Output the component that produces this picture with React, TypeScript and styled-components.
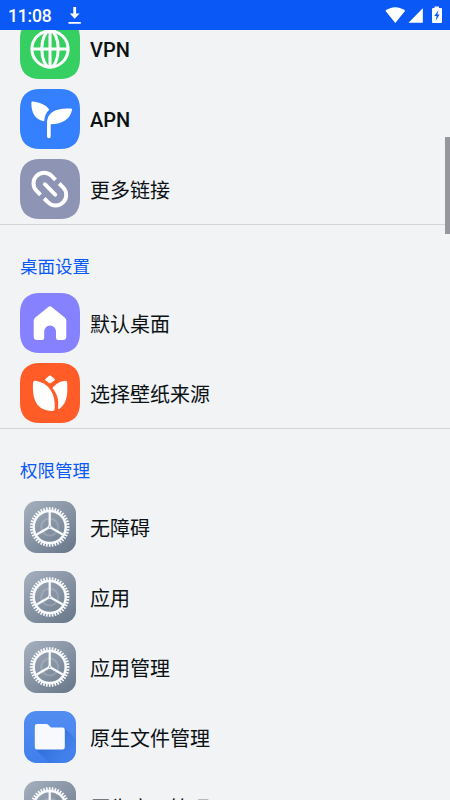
import React from 'react';
import styled, { createGlobalStyle } from 'styled-components';

const GlobalStyle = createGlobalStyle`
  * { box-sizing: border-box; }
  html, body { margin: 0; padding: 0; background: #f1f3f5; overflow: hidden; }
`;

const Screen = styled.div`
  position: relative;
  display: flex;
  flex-direction: column;
  width: 450px;
  height: 800px;
  overflow: hidden;
  background: #f1f3f5;
  color: #0c1114;
  font-family: Roboto, 'Noto Sans CJK SC', sans-serif;
`;

const StatusBar = styled.header`
  display: flex;
  flex: none;
  align-items: center;
  height: 30px;
  padding: 0 8px;
  background: #0a59f7;
  color: #fff;
`;

const Clock = styled.span`
  width: 60px;
  padding-top: 2px;
  font-size: 17.5px;
  font-weight: 500;
  line-height: 28px;
  letter-spacing: -0.15px;
`;

const StatusIcons = styled.div`
  display: flex;
  margin-left: auto;
`;

const List = styled.main`
  flex: 1;
  min-height: 0;
  overflow: hidden;
`;

const Group = styled.section<{ $scrolled?: boolean }>`
  margin-top: ${({ $scrolled }) => ($scrolled ? '-15.6px' : '0')};
`;

const Divider = styled.hr`
  height: 1px;
  margin: 0;
  border: 0;
  background: #d3d5d8;
`;

const GroupTitle = styled.h2`
  height: 62.8px;
  margin: 0;
  padding: 27px 20px 0;
  color: #0a59f7;
  font-size: 17.5px;
  font-weight: 400;
  line-height: 30px;
`;

const Row = styled.div`
  display: flex;
  align-items: center;
  height: 70px;
  padding-left: 20px;
`;

const Label = styled.span<{ $latin?: boolean }>`
  padding-top: ${({ $latin }) => ($latin ? '1px' : '3px')};
  margin-left: 10px;
  font-size: 20px;
  font-weight: ${({ $latin }) => ($latin ? 500 : 400)};
  line-height: 30px;
  white-space: nowrap;
`;

const IconSvg = styled.svg`
  display: block;
  flex: none;
  width: 60px;
  height: 60px;
`;

const ScrollThumb = styled.div`
  position: absolute;
  top: 137px;
  right: 0;
  width: 5px;
  height: 97px;
  background: #96979e;
`;

const SQUIRCLE =
  'M20 0H40C53 0 60 7 60 20V40C60 53 53 60 40 60H20C7 60 0 53 0 40V20C0 7 7 0 20 0Z';

const Tile = ({ color, children }: { color: string; children: React.ReactNode }) => (
  <IconSvg viewBox="0 0 60 60">
    <path d={SQUIRCLE} fill={color} />
    {children}
  </IconSvg>
);

const GlobeIcon = () => (
  <Tile color="#35cf62">
    <g fill="none" stroke="#fff" strokeWidth="3">
      <circle cx="30" cy="30" r="18.1" />
      <ellipse cx="30" cy="30" rx="8.2" ry="18.1" />
      <path d="M30 12v36M12 30h36" />
    </g>
  </Tile>
);

const SproutIcon = () => (
  <Tile color="#3580fe">
    <path
      d="M11.400 13.600c0-.8.6-1.300 1.400-1.100 7.200 1.100 13.700 3.200 16.400 8.200-3.100 2.800-4.700 6.500-5 11.600-8.700-1-13.200-8.500-12.800-18.700z"
      fill="#fff"
    />
    <path
      d="M50.700 19.600c1 0 1.500.6 1.300 1.500C50 30.500 42.600 35 30.700 35.300V47.300a1.850 1.850 0 0 1-3.700 0V34C27 23.800 35 18.800 50.700 19.600z"
      fill="#fff"
    />
  </Tile>
);

const LinkIcon = () => (
  <Tile color="#8e94b3">
    <g fill="none" stroke="#fff" strokeWidth="3.9">
      <path d="M20.500 35.800L16.600 31.900A10.600 10.600 0 0 1 31.600 16.900L35.500 20.800" />
      <path d="M39.200 24.500L43.100 28.400A10.600 10.600 0 0 1 28.100 43.400L24.200 39.500" />
      <path d="M24.800 25.200L35.200 35.600" strokeLinecap="round" />
    </g>
  </Tile>
);

const HomeIcon = () => (
  <Tile color="#8581ff">
    <path
      d="M28 14.200Q30 12.500 32 14.200L44.700 24.500Q46.300 25.800 46.300 28V43.500Q46.300 47 43 47H38.500Q36 47 36 44.500V38.500a5.900 5.900 0 0 0-11.800 0V44.500Q24.200 47 21.700 47H17Q13.700 47 13.700 43.500V28Q13.700 25.800 15.300 24.500Z"
      fill="#fff"
    />
  </Tile>
);

const TulipIcon = () => (
  <Tile color="#ff5c28">
    <g fill="#fff">
      <path d="M29.100 12.800q.9-.8 1.800 0l3.700 3.200q.6.600 0 1.200l-3.700 2.700q-.9.600-1.800 0l-3.700-2.700q-.6-.6 0-1.200z" />
      <path d="M13 20.300c0-1.800.9-2.800 2.500-2.500 13.300 2.200 20 12.400 19.300 27.300-.1 2.100-1.100 3.100-3 2.900C17 47.200 12.200 37.500 13 20.300z" />
      <path d="M45 17.700c1.500-.3 2.200.4 2.200 1.900.5 11.600.1 20.500-7.600 26.100-1.100.8-1.700.3-1.500-1 .8-8-.7-13.200-5.700-19.600C36.100 20.400 39.800 18.600 45 17.700z" />
    </g>
  </Tile>
);

const TEETH = Array.from({ length: 40 }, (_, i) => i * 9);
const SPOKES = [0, 120, 240];

const GearIcon = ({ id }: { id: string }) => (
  <IconSvg viewBox="0 0 60 60">
    <defs>
      <linearGradient id={id} x1="0" y1="0" x2=".8" y2="1">
        <stop offset="0" stopColor="#a6b0bf" />
        <stop offset="1" stopColor="#6c7b8d" />
      </linearGradient>
    </defs>
    <rect x="4" y="4" width="52" height="52" rx="12.5" fill={`url(#${id})`} />
    <circle cx="29.700" cy="30" r="8.500" fill="none" stroke="#fff" strokeOpacity=".16" strokeWidth="2.200" />
    <g fill="none" stroke="#f8fafc">
      <circle cx="29.700" cy="30" r="16" strokeWidth="2.400" />
      {TEETH.map((a) => (
        <path key={a} d="M29.700 10.200V14" strokeWidth="1.700" transform={`rotate(${a} 29.700 30)`} />
      ))}
      {SPOKES.map((a) => (
        <path key={a} d="M29.700 28.500V15" strokeWidth="2.200" transform={`rotate(${a} 29.700 30)`} />
      ))}
    </g>
    <circle cx="29.700" cy="30" r="2" fill="#f8fafc" />
    <circle cx="29.700" cy="30" r=".8" fill="#8794a4" />
  </IconSvg>
);

const FolderIcon = () => (
  <IconSvg viewBox="0 0 60 60">
    <defs>
      <linearGradient id="folder-bg" x1="0" y1="0" x2="0" y2="1">
        <stop offset="0" stopColor="#528df1" />
        <stop offset="1" stopColor="#4080ed" />
      </linearGradient>
      <linearGradient id="folder-shade" x1="0" y1="0" x2="1" y2="1">
        <stop offset="0.4" stopColor="#225dc5" stopOpacity=".45" />
        <stop offset="0.800" stopColor="#225dc5" stopOpacity="0" />
      </linearGradient>
    </defs>
    <rect x="4" y="4" width="52" height="52" rx="12.5" fill="url(#folder-bg)" />
    <path d="M44.500 21L56 32.500V44Q55 55 44 56H29L16 43Z" fill="url(#folder-shade)" />
    <path
      d="M17 17H26.500Q27.500 17 28.200 17.700L31 20.500H42.500Q44.800 20.500 44.800 22.800V40.300Q44.800 42.600 42.500 42.600H17Q14.800 42.600 14.800 40.300V19.200Q14.800 17 17 17Z"
      fill="#f8f9fc"
    />
  </IconSvg>
);

const DownloadGlyph = () => (
  <svg width="14" height="30" viewBox="0 0 14 30" fill="#fff">
    <path d="M5.300 7h2.800v6.500h3.500L6.700 18.700 1.800 13.500h3.500zM.500 22h12.300v1.700H.500z" />
  </svg>
);

const SystemGlyphs = () => (
  <svg width="58" height="30" viewBox="384 0 58 30" fill="#fff">
    <path d="M385.400 10.800C391 6 399.600 6 405.200 10.800L395.300 23z" />
    <path d="M422.800 8.300V22.700H408.500z" />
    <path d="M434.500 6.500h4.500v1.600h2q1 0 1 1v13q0 1-1 1h-8q-1 0-1-1v-13q0-1 1-1h1.500z" />
    <path d="M438.600 10L434.300 16h2.300l-.9 4.700 3.900-6.200h-2.300z" fill="#0a59f7" />
  </svg>
);

export default function App() {
  return (
    <>
      <GlobalStyle />
      <Screen>
        <StatusBar>
          <Clock>11:08</Clock>
          <DownloadGlyph />
          <StatusIcons>
            <SystemGlyphs />
          </StatusIcons>
        </StatusBar>
        <List>
          <Group $scrolled>
            <Row><GlobeIcon /><Label $latin>VPN</Label></Row>
            <Row><SproutIcon /><Label $latin>APN</Label></Row>
            <Row><LinkIcon /><Label>更多链接</Label></Row>
          </Group>
          <Divider />
          <Group>
            <GroupTitle>桌面设置</GroupTitle>
            <Row><HomeIcon /><Label>默认桌面</Label></Row>
            <Row><TulipIcon /><Label>选择壁纸来源</Label></Row>
          </Group>
          <Divider />
          <Group>
            <GroupTitle>权限管理</GroupTitle>
            <Row><GearIcon id="gear-accessibility" /><Label>无障碍</Label></Row>
            <Row><GearIcon id="gear-apps" /><Label>应用</Label></Row>
            <Row><GearIcon id="gear-app-management" /><Label>应用管理</Label></Row>
            <Row><FolderIcon /><Label>原生文件管理</Label></Row>
            <Row><GearIcon id="gear-native-apps" /><Label>原生应用管理</Label></Row>
          </Group>
        </List>
        <ScrollThumb />
      </Screen>
    </>
  );
}
